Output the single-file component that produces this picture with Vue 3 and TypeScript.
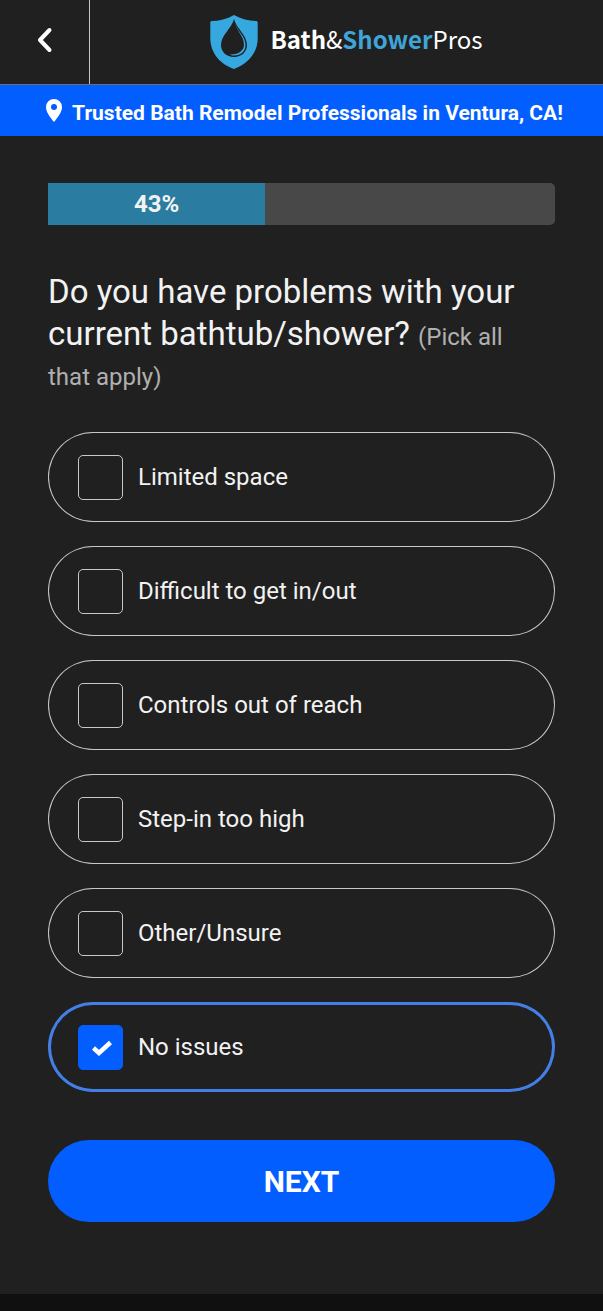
<script setup lang="ts">
import { computed, ref } from 'vue'

const step = ref<number>(3)
const totalSteps = 7
const progress = computed<number>(() => (step.value / totalSteps) * 100)

const options: string[] = [
  'Limited space',
  'Difficult to get in/out',
  'Controls out of reach',
  'Step-in too high',
  'Other/Unsure',
  'No issues',
]

const selected = ref<string[]>(['No issues'])
</script>

<template>
  <div class="page">
    <header class="header">
      <button class="back" type="button" aria-label="Back">
        <svg width="16" height="26" viewBox="0 0 16 26" aria-hidden="true">
          <path d="M12.5 3 L3 13 L12.5 23" fill="none" stroke="#fff" stroke-width="4" stroke-linecap="round" stroke-linejoin="round" />
        </svg>
      </button>
      <div class="brand">
        <svg class="shield" width="48" height="54" viewBox="0 0 48 54" aria-hidden="true">
          <path d="M24 0 C17 4 9 6 1.500 6 C.5 6 .3 7 .3 8 V23 C.3 38 10 49 24 54 C38 49 47.700 38 47.700 23 V8 C47.700 7 47.500 6 46.500 6 C39 6 31 4 24 0Z" fill="#35a8e0" />
          <path d="M24 4 C22 13 11 20 11 30 C11 37 16.500 42 24 42 C31.500 42 37 37 37 30 C37 20 26 13 24 4Z" fill="#202020" />
          <path d="M25 8 C27 16 35.500 21 35.500 30 C35.500 36.500 30.500 40.500 24 40.500 C22 40.500 20.500 40 19.500 39.500 C28 40 34 36 34 29.500 C34 22 27 16 25 8Z" fill="#35a8e0" />
        </svg>
        <span class="wordmark"><b>Bath</b><i>&amp;</i><b class="accent">Shower</b><i>Pros</i></span>
      </div>
    </header>

    <p class="banner">
      <svg width="16" height="23" viewBox="0 0 16 23" aria-hidden="true">
        <path fill-rule="evenodd" d="M8 0 A8 8 0 0 0 0 8 C0 13 4 18 8 23 C12 18 16 13 16 8 A8 8 0 0 0 8 0Z M8 5 A3 3 0 1 1 8 11 A3 3 0 1 1 8 5Z" fill="#fff" />
      </svg>
      <span>Trusted Bath Remodel Professionals in Ventura, CA!</span>
    </p>

    <main class="content">
      <div class="progress" role="progressbar" aria-label="Progress" :aria-valuenow="Math.round(progress)" aria-valuemin="0" aria-valuemax="100">
        <div class="bar" :style="{ width: progress + '%' }">{{ Math.round(progress) }}%</div>
      </div>

      <form @submit.prevent>
        <fieldset class="question">
          <legend>
            <span class="title">Do you have problems with your current bathtub/shower?{{ ' ' }}</span><span class="hint">(Pick all that apply)</span>
          </legend>
          <div class="options">
            <label v-for="option in options" :key="option" class="option" :class="{ active: selected.includes(option) }">
              <input v-model="selected" type="checkbox" name="problems" :value="option" />
              <svg class="tick" width="22" height="16" viewBox="0 0 22 16" aria-hidden="true">
                <path d="M2.500 8 L8 13 L19.500 2.500" fill="none" stroke="#fff" stroke-width="4.500" />
              </svg>
              <span>{{ option }}</span>
            </label>
          </div>
        </fieldset>
        <button class="next" type="submit">NEXT</button>
      </form>
    </main>
    <footer class="footer"></footer>
  </div>
</template>

<style>
body {
  margin: 0;
  background: #202020;
}
</style>

<style scoped>
.page {
  display: flex;
  flex-direction: column;
  min-height: 100vh;
  background: #202020;
  color: #f2f2f2;
  font-family: Roboto, "Liberation Sans", sans-serif;
}
.header {
  display: flex;
  height: 84px;
  border-bottom: 1px solid #6b7078;
}
.back {
  display: flex;
  align-items: center;
  justify-content: center;
  width: 90px;
  padding: 0 0 4px;
  border: 0;
  border-right: 1px solid #c4c4c4;
  background: none;
  cursor: pointer;
}
.brand {
  display: flex;
  flex: 1;
  align-items: center;
  justify-content: center;
  gap: 12px;
}
.wordmark {
  padding-bottom: 6px;
  color: #fff;
  font: 400 24px/36px "Noto Sans CJK SC", sans-serif;
}
.wordmark b {
  font-weight: 700;
}
.wordmark i {
  font-style: normal;
}
.wordmark .accent {
  color: #3fa5d8;
}
.banner {
  display: flex;
  align-items: center;
  justify-content: center;
  gap: 10px;
  box-sizing: border-box;
  min-height: 51px;
  margin: 0;
  padding: 4px 2px 0 8px;
  background: #035eff;
  color: #fff;
  font-size: 21px;
  line-height: 28px;
  font-weight: 700;
}
.banner svg {
  margin-bottom: 4px;
}
.content {
  padding: 47px 48px 72px;
}
.progress {
  overflow: hidden;
  border-radius: 0 5px 5px 0;
  background: #484848;
}
.bar {
  box-sizing: border-box;
  background: #2a7da0;
  font-size: 24px;
  font-weight: 700;
  line-height: 42px;
  text-align: center;
}
.question {
  min-width: 0;
  margin: 46px 0 0;
  padding: 0;
  border: 0;
}
legend {
  padding: 0 24px 0 0;
  font-size: 24px;
  line-height: 36px;
}
.title {
  font-size: 33px;
  line-height: 42px;
}
.hint {
  color: #b0b0b0;
  line-height: 40px;
}
.options {
  display: flex;
  flex-direction: column;
  gap: 24px;
  margin-top: 35px;
}
.option {
  position: relative;
  display: flex;
  align-items: center;
  gap: 15px;
  box-sizing: border-box;
  min-height: 90px;
  padding: 0 30px;
  border-radius: 45px;
  box-shadow: inset 0 0 0 1px #c8c8c8;
  font-size: 24px;
  line-height: 32px;
  cursor: pointer;
}
.option.active {
  box-shadow: inset 0 0 0 3px #437fe6;
}
.option input {
  appearance: none;
  flex: none;
  box-sizing: border-box;
  width: 45px;
  height: 45px;
  margin: 0;
  border: 1px solid #c8c8c8;
  border-radius: 5px;
}
.option input:checked {
  border-color: #035eff;
  background: #035eff;
}
.tick {
  position: absolute;
  left: 43px;
  top: 50%;
  margin-top: -7px;
  visibility: hidden;
}
.active .tick {
  visibility: visible;
}
.next {
  display: block;
  width: 100%;
  min-height: 82px;
  margin-top: 48px;
  padding: 2px 0 0;
  border: 0;
  border-radius: 41px;
  background: #035eff;
  color: #fff;
  font: 700 30px/40px Roboto, "Liberation Sans", sans-serif;
  cursor: pointer;
}
.footer {
  flex: 1;
  min-height: 17px;
  background: #101010;
}
</style>
